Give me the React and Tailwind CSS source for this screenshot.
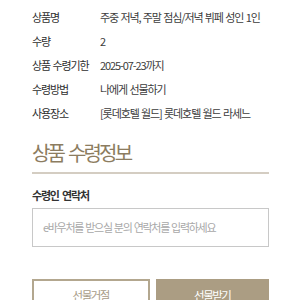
export default function App() {
  const rows = [
    ["상품명", "주중 저녁, 주말 점심/저녁 뷔페 성인 1인"],
    ["수량", "2"],
    ["상품 수령기한", "2025-07-23까지"],
    ["수령방법", "나에게 선물하기"],
    ["사용장소", "[롯데호텔 월드] 롯데호텔 월드 라세느"],
  ];
  return (
    <div
      className="w-[300px] h-[300px] overflow-hidden bg-white"
      style={{ fontFamily: '"Noto Sans CJK KR", "Noto Sans", sans-serif' }}
    >
      <div className="pl-[32px] pr-[31px] pt-[5px]">
        <div className="flex flex-col">
          {rows.map(([k, v]) => (
            <div key={k} className="flex h-[24px] items-center text-[11px] tracking-[-1.1px] [word-spacing:1px] whitespace-nowrap">
              <div className="w-[68px] shrink-0 text-[#2e2e2e]">{k}</div>
              <div className="text-[#3c3c3c]">{v}</div>
            </div>
          ))}
        </div>
        <div className="mt-[15px] text-[20px] leading-[26px] text-[#8c7c60] tracking-[-2.8px] [word-spacing:3px]">
          상품 수령정보
        </div>
        <div className="mt-[6px] h-[2px] bg-[#d4cdc2]" />
        <div className="mt-[13px] text-[11px] leading-[16px] font-bold text-[#333] tracking-[-1.2px] [word-spacing:2px]">
          수령인 연락처
        </div>
        <div className="mt-[5px] h-[39px] border border-[#c8c8c8] flex items-center pl-[10px] text-[11px] text-[#a8a8a8] tracking-[-1.3px] [word-spacing:1px]">
          e바우처를 받으실 분의 연락처를 입력하세요
        </div>
        <div className="mt-[32px] flex gap-[6px]">
          <div className="flex-1 h-[34px] border-2 border-[#b3a78f] flex items-center justify-center text-[11.5px] tracking-[-1.5px] text-[#a89c88]">
            선물거절
          </div>
          <div className="flex-1 h-[34px] bg-[#ab9d83] flex items-center justify-center text-[11.5px] tracking-[-1.5px] text-white">
            선물받기
          </div>
        </div>
      </div>
    </div>
  );
}
